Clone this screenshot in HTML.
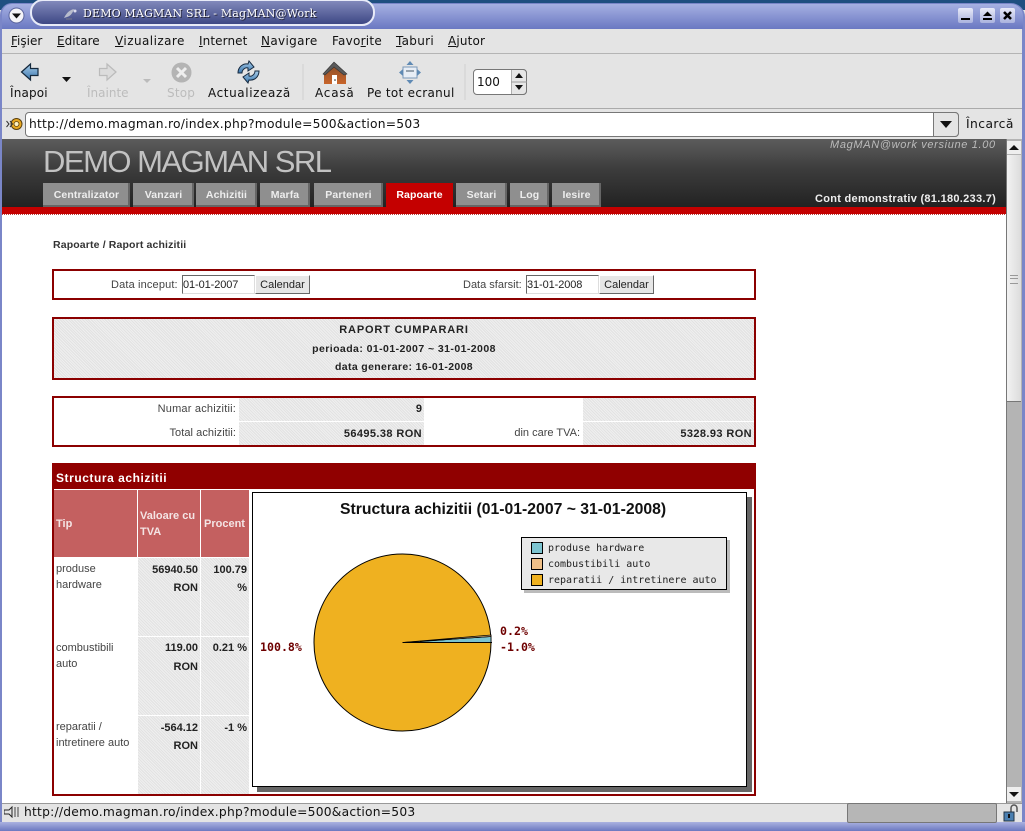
<!DOCTYPE html>
<html><head><meta charset="utf-8"><title>DEMO MAGMAN SRL - MagMAN@Work</title>
<style>
html,body{margin:0;padding:0;width:1025px;height:831px;overflow:hidden;background:#e4e4e4}
body{position:relative;font-family:"Liberation Sans",sans-serif}
.a{position:absolute}
.t{position:absolute;white-space:nowrap;line-height:14px}
.m{font-family:"DejaVu Sans",sans-serif;font-size:12px;color:#111}
.p{font-size:11px;color:#444}
.b{font-weight:bold;color:#222}
.r{text-align:right}
.h{background:repeating-linear-gradient(45deg,#efefef 0,#efefef 1px,#e2e2e2 1px,#e2e2e2 2px)}
.box{position:absolute;box-sizing:border-box;border:2px solid #8b0000}
.tab{position:absolute;top:183px;height:24px;background:#8f8f8f;box-shadow:inset -2px -2px 0 #666;color:#eee;font-size:10.5px;font-weight:bold;text-align:center;line-height:24px;letter-spacing:.1px}
.btn{position:absolute;box-sizing:border-box;background:#e6e6e6;border:1px solid;border-color:#fff #666 #666 #fff;font-size:11px;color:#222;text-align:center;line-height:18px;height:19px}
.inp{position:absolute;box-sizing:border-box;background:#fff;border:1px solid;border-color:#666 #ddd #ddd #666;font-size:11px;color:#222;height:19px;line-height:18px;padding-left:0;letter-spacing:-.1px}
.wb{position:absolute;top:8px;width:15px;height:15px;background:linear-gradient(#e8eaf8,#aab2de);border-radius:2px}
.lg{font-family:"DejaVu Sans Mono",monospace;font-size:10px;color:#222}
.lb{font-family:"DejaVu Sans Mono",monospace;font-weight:bold;font-size:11.6px;color:#6e0000}
.sw{position:absolute;left:531px;width:10px;height:10px;border:1px solid #000}
</style></head><body>

<!-- desktop + window frame -->
<div class="a" style="left:0;top:0;width:1025px;height:10px;background:#1f4f80"></div>
<div class="a" style="left:0;top:3px;width:1025px;height:828px;border-radius:12px 14px 0 0;background:#7a86c8"></div>
<div class="a" style="left:2px;top:4px;width:1021px;height:25px;border-radius:10px 12px 0 0;background:linear-gradient(#a6b0e2,#6a78c2)"></div>
<div class="a" style="left:2px;top:29px;width:1020px;height:793px;background:#e4e4e4"></div>
<div class="a" style="left:0;top:822px;width:1025px;height:9px;background:linear-gradient(#aab2e0,#6c78c0)"></div>

<!-- titlebar -->
<svg class="a" style="left:8px;top:7px" width="17" height="17"><circle cx="8.5" cy="8.5" r="7.5" fill="#f4f4f8" stroke="#59639c"/><path d="M4 6.5h9l-4.5 5z" fill="#111"/></svg>
<div class="a" style="left:30px;top:-1px;width:345px;height:27px;box-sizing:border-box;border:2px solid #e8ebf8;border-radius:13px;background:linear-gradient(#8189bb,#3e4885)"></div>
<svg class="a" style="left:62px;top:7px" width="16" height="14"><path d="M2 11C5 5 8 3 12 2c-1 3-3 7-7 8z" fill="#b8bccc"/><circle cx="13" cy="4" r="1.5" fill="#dde"/><path d="M4 12h6" stroke="#778" /></svg>
<div class="t" style="left:83px;top:7px;font:normal 11px/14px 'DejaVu Serif','Liberation Serif',serif;color:#fff;letter-spacing:.17px;text-shadow:1px 1px 0 #223">DEMO MAGMAN SRL - MagMAN@Work</div>
<div class="wb" style="left:958px"><div class="a" style="left:3px;top:10px;width:9px;height:2px;background:#000"></div></div>
<div class="wb" style="left:980px"><svg class="a" style="left:2px;top:2px" width="11" height="11"><path d="M5.5 1.5L10 6H1z" fill="#000"/><path d="M1 8h9v2H1z" fill="#000"/></svg></div>
<div class="wb" style="left:1000px"><svg class="a" style="left:2px;top:2px" width="11" height="11"><path d="M2 2l7 7M9 2l-7 7" stroke="#000" stroke-width="2.6"/></svg></div>

<!-- menubar -->
<div class="a" style="left:2px;top:53px;width:1020px;height:1px;background:#b4b4b4"></div>
<div class="t m" style="left:11px;top:34px"><u>F</u>işier</div>
<div class="t m" style="left:57px;top:34px"><u>E</u>ditare</div>
<div class="t m" style="left:115px;top:34px;letter-spacing:.45px"><u>V</u>izualizare</div>
<div class="t m" style="left:199px;top:34px;letter-spacing:.1px"><u>I</u>nternet</div>
<div class="t m" style="left:261px;top:34px;letter-spacing:.35px"><u>N</u>avigare</div>
<div class="t m" style="left:332px;top:34px;letter-spacing:.25px">Favo<u>r</u>ite</div>
<div class="t m" style="left:396px;top:34px;letter-spacing:.3px"><u>T</u>aburi</div>
<div class="t m" style="left:448px;top:34px;letter-spacing:.15px"><u>A</u>jutor</div>

<!-- toolbar -->
<div class="a" style="left:2px;top:108px;width:1020px;height:1px;background:#aaa"></div>
<svg class="a" style="left:0;top:56px" width="530" height="50">
<defs><linearGradient id="g1" x1="0" y1="0" x2="0" y2="1"><stop offset="0" stop-color="#a8cdea"/><stop offset="1" stop-color="#3a76ad"/></linearGradient>
<linearGradient id="g2" x1="0" y1="0" x2="0" y2="1"><stop offset="0" stop-color="#8a4f2a"/><stop offset="1" stop-color="#c8642a"/></linearGradient></defs>
<path d="M21.5 16l9-8v4.500h7.500v7h-7.500v4.500z" fill="url(#g1)" stroke="#14283c" stroke-width="1.2"/>
<path d="M62 21h9l-4.500 5z" fill="#111"/>
<path d="M116 16l-9-8v4.500h-7.500v7h7.500v4.500z" fill="#dcdcdc" stroke="#bbb" stroke-width="1.2"/>
<path d="M143 23h8l-4 4z" fill="#bbb"/>
<circle cx="181.500" cy="16.500" r="10" fill="#b4b4b4"/><path d="M177 12l9 9M186 12l-9 9" stroke="#eee" stroke-width="3"/>
<path d="M238 17c0-6 5-10 10-9l1-3 5 6-6 4 0-3c-3-1-6 2-6 5z" fill="url(#g1)" stroke="#162a40"/>
<path d="M259 15c0 6-5 10-10 9l-1 3-5-6 6-4 0 3c3 1 6-2 6-5z" fill="url(#g1)" stroke="#162a40"/>
<path d="M303 8v36M465 8v36" stroke="#cfcfcf"/>
<path d="M324 17l10-9 12 9v11h-22z" fill="url(#g2)"/><path d="M323 18l11-12 13 12-3 1-10-8-9 8z" fill="#5a5a5a" stroke="#333" stroke-width=".6"/><rect x="332" y="19" width="5" height="9" fill="#fff"/><circle cx="335" cy="24" r=".8" fill="#222"/>
<rect x="403" y="11" width="14" height="11" fill="#e8eef6" stroke="#7a98b8"/><path d="M406 15h8" stroke="#456"/>
<path d="M410 5l-3.500 4h7zM410 28l-3.500-4h7zM399 16.500l4-3.500v7zM421 16.500l-4-3.500v7z" fill="#5f8ab4"/>
</svg>
<div class="t m" style="left:10px;top:86px;letter-spacing:.15px">Înapoi</div>
<div class="t m" style="left:87px;top:86px;color:#bcbcbc">Înainte</div>
<div class="t m" style="left:167px;top:86px;color:#bcbcbc;letter-spacing:.2px">Stop</div>
<div class="t m" style="left:208px;top:86px;letter-spacing:.6px">Actualizează</div>
<div class="t m" style="left:315px;top:86px;letter-spacing:.8px">Acasă</div>
<div class="t m" style="left:367px;top:86px;letter-spacing:.3px">Pe tot ecranul</div>
<div class="a" style="left:473px;top:69px;width:54px;height:26px;box-sizing:border-box;border:1px solid #777;border-radius:4px;background:#fff"></div>
<div class="t m" style="left:477px;top:75px;font-size:12px">100</div>
<svg class="a" style="left:511px;top:69px" width="16" height="26"><path d="M0 .5h12a3.500 3.500 0 0 1 3.500 3.500v18a3.500 3.500 0 0 1-3.500 3.500H0z" fill="#e6e6e6" stroke="#777"/><path d="M0 13h16" stroke="#999"/><path d="M4 9l4-5 4 5zM4 16h8l-4 5z" fill="#111"/></svg>

<!-- address bar -->
<svg class="a" style="left:5px;top:116px" width="18" height="16"><circle cx="11.500" cy="8" r="5.500" fill="#e8a820" stroke="#5a4010"/><circle cx="11.500" cy="8" r="2.500" fill="#fff2c0" stroke="#5a4010" stroke-width=".8"/><path d="M1.500 5l2.500 3-2.500 3M5 5l2.500 3L5 11" fill="none" stroke="#333"/></svg>
<div class="a" style="left:25px;top:112px;width:934px;height:25px;box-sizing:border-box;border:1px solid #777;border-radius:4px;background:#fff"></div>
<div class="t m" style="left:29px;top:117px;font-size:12.3px;letter-spacing:.22px">http://demo.magman.ro/index.php?module=500&amp;action=503</div>
<div class="a" style="left:933px;top:112px;width:26px;height:25px;box-sizing:border-box;border:1px solid #777;border-radius:0 4px 4px 0;background:#e4e4e4"></div>
<svg class="a" style="left:939px;top:120px" width="14" height="9"><path d="M1 1h12l-6 7z" fill="#111"/></svg>
<div class="t m" style="left:966px;top:117px;font-size:12.3px;letter-spacing:.43px">Încarcă</div>

<!-- page -->
<div class="a" style="left:2px;top:139px;width:1004px;height:665px;background:#fff"></div>
<div class="a" style="left:2px;top:139px;width:1004px;height:68px;background:linear-gradient(#5c5c5c,#3c3c3c 45%,#222)"></div>
<div class="a" style="left:2px;top:207px;width:1004px;height:7px;background:#c40000"></div>
<div class="a" style="left:2px;top:214px;width:1004px;height:1px;background:repeating-linear-gradient(90deg,#c04040 0,#c04040 1px,#fff 1px,#fff 2px)"></div>
<div class="t" style="left:43px;top:145px;font-size:31px;line-height:34px;color:#c2c2c2;letter-spacing:-1.5px">DEMO MAGMAN SRL</div>
<div class="t" style="left:830px;top:138px;font-size:11px;font-style:italic;color:#bbb;letter-spacing:.66px">MagMAN@work versiune 1.00</div>
<div class="t" style="left:815px;top:192px;font-size:11px;font-weight:bold;color:#eee;letter-spacing:.29px">Cont demonstrativ (81.180.233.7)</div>
<div class="tab" style="left:43px;width:87px">Centralizator</div>
<div class="tab" style="left:133px;width:61px">Vanzari</div>
<div class="tab" style="left:196px;width:61px">Achizitii</div>
<div class="tab" style="left:260px;width:50px">Marfa</div>
<div class="tab" style="left:314px;width:69px">Parteneri</div>
<div class="tab" style="left:386px;width:67px;background:#c40000;box-shadow:none;color:#fff">Rapoarte</div>
<div class="tab" style="left:456px;width:51px">Setari</div>
<div class="tab" style="left:510px;width:39px">Log</div>
<div class="tab" style="left:552px;width:49px">Iesire</div>

<div class="t p b" style="left:53px;top:238px;font-size:10.5px;letter-spacing:.14px;color:#333">Rapoarte / Raport achizitii</div>

<div class="box" style="left:52px;top:269px;width:704px;height:31px"></div>
<div class="t p" style="left:111px;top:278px;letter-spacing:.15px">Data inceput:</div>
<div class="inp" style="left:182px;top:275px;width:73px">01-01-2007</div>
<div class="btn" style="left:255px;top:275px;width:55px">Calendar</div>
<div class="t p" style="left:463px;top:278px">Data sfarsit:</div>
<div class="inp" style="left:526px;top:275px;width:73px">31-01-2008</div>
<div class="btn" style="left:599px;top:275px;width:55px">Calendar</div>

<div class="box h" style="left:52px;top:317px;width:704px;height:63px"></div>
<div class="t b" style="left:54px;width:700px;top:323px;text-align:center;font-size:11px;letter-spacing:.85px">RAPORT CUMPARARI</div>
<div class="t b" style="left:54px;width:700px;top:342px;text-align:center;font-size:10.5px;letter-spacing:.43px">perioada: 01-01-2007 ~ 31-01-2008</div>
<div class="t b" style="left:54px;width:700px;top:360px;text-align:center;font-size:10.5px;letter-spacing:.36px">data generare: 16-01-2008</div>

<div class="box" style="left:52px;top:396px;width:704px;height:51px"></div>
<div class="a h" style="left:239px;top:398px;width:185px;height:23px"></div>
<div class="a h" style="left:583px;top:398px;width:171px;height:23px"></div>
<div class="a h" style="left:239px;top:422px;width:185px;height:23px"></div>
<div class="a h" style="left:583px;top:422px;width:171px;height:23px"></div>
<div class="t p r" style="left:54px;width:182px;top:402px;letter-spacing:.2px">Numar achizitii:</div>
<div class="t b r" style="left:239px;width:183px;top:402px;font-size:11px">9</div>
<div class="t p r" style="left:54px;width:182px;top:426px;letter-spacing:.07px">Total achizitii:</div>
<div class="t b r" style="left:239px;width:183px;top:427px;font-size:11px;letter-spacing:.4px">56495.38 RON</div>
<div class="t p r" style="left:426px;width:154px;top:426px">din care TVA:</div>
<div class="t b r" style="left:583px;width:169px;top:427px;font-size:11px;letter-spacing:.4px">5328.93 RON</div>

<div class="box" style="left:52px;top:463px;width:704px;height:333px"></div>
<div class="a" style="left:52px;top:463px;width:704px;height:26px;background:#900000"></div>
<div class="t" style="left:56px;top:471px;font-size:12px;font-weight:bold;color:#fff;letter-spacing:.55px">Structura achizitii</div>

<div class="a" style="left:54px;top:490px;width:83px;height:67px;background:#c46060"></div>
<div class="a" style="left:138px;top:490px;width:62px;height:67px;background:#c46060"></div>
<div class="a" style="left:201px;top:490px;width:48px;height:67px;background:#c46060"></div>
<div class="t" style="left:56px;top:517px;font-size:11px;font-weight:bold;color:#f4e4e4">Tip</div>
<div class="t" style="left:140px;top:509px;font-size:11px;font-weight:bold;color:#f4e4e4">Valoare cu</div>
<div class="t" style="left:140px;top:525px;font-size:11px;font-weight:bold;color:#f4e4e4">TVA</div>
<div class="t" style="left:204px;top:517px;font-size:11px;font-weight:bold;color:#f4e4e4">Procent</div>

<div class="a h" style="left:138px;top:558px;width:62px;height:78px"></div>
<div class="a h" style="left:201px;top:558px;width:48px;height:78px"></div>
<div class="a h" style="left:138px;top:637px;width:62px;height:78px"></div>
<div class="a h" style="left:201px;top:637px;width:48px;height:78px"></div>
<div class="a h" style="left:138px;top:716px;width:62px;height:78px"></div>
<div class="a h" style="left:201px;top:716px;width:48px;height:78px"></div>

<div class="t p" style="left:56px;top:562px">produse</div>
<div class="t p" style="left:56px;top:578px">hardware</div>
<div class="t b r" style="left:138px;width:60px;top:563px;font-size:11px">56940.50</div>
<div class="t b r" style="left:138px;width:60px;top:581px;font-size:11px">RON</div>
<div class="t b r" style="left:201px;width:46px;top:563px;font-size:11px">100.79</div>
<div class="t b r" style="left:201px;width:46px;top:581px;font-size:11px">%</div>

<div class="t p" style="left:56px;top:641px">combustibili</div>
<div class="t p" style="left:56px;top:657px">auto</div>
<div class="t b r" style="left:138px;width:60px;top:641px;font-size:11px">119.00</div>
<div class="t b r" style="left:138px;width:60px;top:660px;font-size:11px">RON</div>
<div class="t b r" style="left:201px;width:46px;top:641px;font-size:11px">0.21 %</div>

<div class="t p" style="left:56px;top:720px">reparatii /</div>
<div class="t p" style="left:56px;top:736px">intretinere auto</div>
<div class="t b r" style="left:138px;width:60px;top:721px;font-size:11px">-564.12</div>
<div class="t b r" style="left:138px;width:60px;top:739px;font-size:11px">RON</div>
<div class="t b r" style="left:201px;width:46px;top:721px;font-size:11px">-1 %</div>

<!-- chart -->
<div class="a" style="left:257px;top:497px;width:495px;height:295px;background:#666"></div>
<div class="a" style="left:252px;top:492px;width:495px;height:295px;box-sizing:border-box;border:1px solid #000;background:#fff"></div>
<div class="t" style="left:340px;top:502px;font-size:15.75px;line-height:16px;font-weight:bold;color:#111">Structura achizitii (01-01-2007 ~ 31-01-2008)</div>
<div class="a" style="left:524px;top:540px;width:206px;height:53px;background:#bbb"></div>
<div class="a" style="left:521px;top:537px;width:206px;height:53px;box-sizing:border-box;border:1px solid #000;background:#e8e8e8"></div>
<div class="sw" style="top:542px;background:#7cc4d0"></div>
<div class="sw" style="top:558px;background:#f0c088"></div>
<div class="sw" style="top:574px;background:#efb120"></div>
<div class="t lg" style="left:548px;top:542px">produse hardware</div>
<div class="t lg" style="left:548px;top:558px">combustibili auto</div>
<div class="t lg" style="left:548px;top:574px">reparatii / intretinere auto</div>
<svg class="a" style="left:300px;top:545px" width="200" height="195">
<circle cx="102.5" cy="97.5" r="88.5" fill="#efb120" stroke="#000"/>
<path d="M102.5 97.5L191 97.5 191 91.500z" fill="#7cc4d0" stroke="#000" stroke-width=".8"/>
<path d="M102.5 97.5L191 91.500 191 90z" fill="#f0c088" stroke="#000" stroke-width=".8"/>
<path d="M102.5 97.5H192" stroke="#000"/>
<path d="M120 97L160 94 120 96z" fill="#000"/>
</svg>
<div class="t lb" style="left:500px;top:624px">0.2%</div>
<div class="t lb" style="left:500px;top:640px">-1.0%</div>
<div class="t lb" style="left:260px;top:640px">100.8%</div>

<!-- scrollbar -->
<div class="a" style="left:1006px;top:139px;width:16px;height:665px;background:#b4b4b4;border-left:1px solid #777;box-sizing:border-box"></div>
<div class="a" style="left:1007px;top:141px;width:14px;height:13px;background:#eee"></div>
<svg class="a" style="left:1008px;top:144px" width="12" height="7"><path d="M1 6l5-5 5 5z" fill="#111"/></svg>
<div class="a" style="left:1007px;top:155px;width:14px;height:246px;background:linear-gradient(90deg,#f2f2f2,#dcdcdc);box-shadow:0 1px 0 #777"></div>
<div class="a" style="left:1010px;top:275px;width:8px;height:7px;border-top:1px solid #999;border-bottom:1px solid #999"></div>
<div class="a" style="left:1010px;top:278px;width:8px;height:1px;background:#999"></div>
<div class="a" style="left:1007px;top:787px;width:14px;height:14px;background:#eee"></div>
<svg class="a" style="left:1008px;top:791px" width="12" height="7"><path d="M1 1h10l-5 5z" fill="#111"/></svg>

<!-- status bar -->
<div class="a" style="left:2px;top:803px;width:1020px;height:1px;background:#999"></div>
<svg class="a" style="left:4px;top:806px" width="18" height="12"><path d="M0 4h5l3-3v10l-3-3H0z" fill="none" stroke="#222"/><path d="M11 1v10M14 1v10" stroke="#444"/></svg>
<div class="t m" style="left:24px;top:805px;font-size:12.3px;letter-spacing:.22px">http://demo.magman.ro/index.php?module=500&amp;action=503</div>
<div class="a" style="left:847px;top:803px;width:150px;height:20px;box-sizing:border-box;border:1px solid #777;border-radius:2px;background:#b6b6b6"></div>
<svg class="a" style="left:1002px;top:804px" width="18" height="18"><path d="M9 8V4a3 3 0 0 1 6 0v4" fill="none" stroke="#555" stroke-width="1.5"/><rect x="2" y="8" width="10" height="9" fill="#4a7fb0" stroke="#234"/><rect x="6" y="10" width="2" height="4" fill="#111"/></svg>
</body></html>
